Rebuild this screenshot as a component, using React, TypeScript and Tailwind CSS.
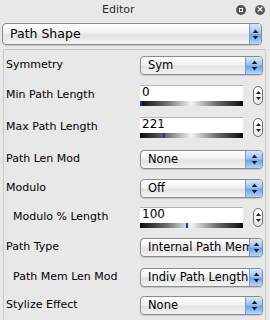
import type { ReactNode } from 'react'

const FONT = "font-['DejaVu_Sans',Verdana,sans-serif]"

function Arrows() {
  return (
    <svg viewBox="0 0 7 11" className="h-[11px] w-[7px]" aria-hidden>
      <path d="M3.5 0.5 L6.2 4 H0.8 Z" fill="#1b1b1b" />
      <path d="M3.5 10.5 L6.2 7 H0.8 Z" fill="#1b1b1b" />
    </svg>
  )
}

/** Aqua pop-up button. */
function Popup({ value, arrowW = 'w-[17px]', big = false }: { value: string; arrowW?: string; big?: boolean }) {
  return (
    <div
      className={`flex w-full min-w-0 overflow-hidden rounded-[4px] border border-[#8c8c8c] bg-[linear-gradient(#ffffff,#f1f1f1_45%,#e2e2e2_55%,#f4f4f4)] shadow-[0_1px_1px_rgba(0,0,0,0.15)] ${big ? 'h-[22px]' : 'h-[19px]'}`}
    >
      <span
        className={`min-w-0 flex-1 overflow-hidden whitespace-nowrap pl-[7px] text-black ${big ? 'text-[12.5px] leading-[20px]' : 'text-[11.5px] leading-[17px]'}`}
      >
        {value}
      </span>
      <span
        className={`grid shrink-0 place-items-center border-l border-[#7e9bc4] bg-[linear-gradient(#d7e8fb,#9cc3f2_45%,#6da4ea_55%,#b3d6fb)] ${arrowW}`}
      >
        <Arrows />
      </span>
    </div>
  )
}

function Stepper() {
  return (
    <div className="flex h-[19px] w-[10px] flex-col items-center justify-center gap-[3px] rounded-full border border-[#6f6f6f] bg-[linear-gradient(#ffffff,#e6e6e6)]">
      <svg viewBox="0 0 5 3" className="h-[3px] w-[5px]" aria-hidden>
        <path d="M2.5 0 L5 3 H0 Z" fill="#222" />
      </svg>
      <svg viewBox="0 0 5 3" className="h-[3px] w-[5px]" aria-hidden>
        <path d="M2.5 3 L5 0 H0 Z" fill="#222" />
      </svg>
    </div>
  )
}

/** Number field with its gradient slider strip underneath. */
function SliderField({ value, pos }: { value: string; pos: number }) {
  return (
    <div className="flex items-center gap-[10px]">
      <div className="flex h-[21px] w-[103px] flex-col justify-between border-t border-[#b5b5b5] bg-white">
        <span className="pl-[2px] text-[12px] leading-[13px] text-black">{value}</span>
        <div className="relative h-[5px] w-full bg-[linear-gradient(to_right,#0c0c0c,#6a6a6a_25%,#f4f4f4_50%,#6a6a6a_75%,#0c0c0c)]">
          <span className="absolute top-0 h-[5px] w-[2px] bg-[#1b2fd6]" style={{ left: `${pos}px` }} />
        </div>
      </div>
      <Stepper />
    </div>
  )
}

function Row({ label, indent = false, h, children }: { label: string; indent?: boolean; h: string; children: ReactNode }) {
  return (
    <div className={`flex items-center ${h}`}>
      <span className={`w-[135px] shrink-0 whitespace-nowrap text-[11px] text-black ${indent ? 'pl-[8px]' : 'pl-[1px]'}`}>
        {label}
      </span>
      <div className="min-w-0 flex-1">{children}</div>
    </div>
  )
}

export default function App() {
  return (
    <div className={`flex h-[320px] w-[270px] flex-col overflow-hidden bg-[#e8e8e8] ${FONT}`}>
      <div className="flex h-[19px] items-center">
        <span className="flex-1 pl-[102px] text-[11px] leading-none text-[#2a2a2a]">Editor</span>
        <div className="flex items-center gap-[9px] pr-[5px]">
          <span className="grid size-[10px] place-items-center rounded-full bg-[#555]">
            <span className="size-[4px] border border-white" />
          </span>
          <span className="grid size-[10px] place-items-center rounded-full bg-[#555] text-[9px] font-bold leading-none text-white">
            ×
          </span>
        </div>
      </div>

      <div className="mt-[4px] px-[2px] pr-[8px]">
        <Popup value="Path Shape" arrowW="w-[12px]" big />
      </div>

      <div className="ml-[3px] mr-[4px] mt-[4px] flex flex-1 flex-col border-l border-t border-r border-[#c9c9c9] pl-[1px] pr-[2px]">
        <Row label="Symmetry" h="h-[30px]">
          <Popup value="Sym" />
        </Row>
        <Row label="Min Path Length" h="h-[30px]">
          <SliderField value="0" pos={0} />
        </Row>
        <Row label="Max Path Length" h="h-[34px]">
          <SliderField value="221" pos={23} />
        </Row>
        <Row label="Path Len Mod" h="h-[30px]">
          <Popup value="None" />
        </Row>
        <Row label="Modulo" h="h-[28px]">
          <Popup value="Off" />
        </Row>
        <Row label="Modulo % Length" indent h="h-[30px]">
          <SliderField value="100" pos={46} />
        </Row>
        <Row label="Path Type" h="h-[31px]">
          <Popup value="Internal Path Mem" arrowW="w-[13px]" />
        </Row>
        <Row label="Path Mem Len Mod" indent h="h-[28px]">
          <Popup value="Indiv Path Length" arrowW="w-[13px]" />
        </Row>
        <Row label="Stylize Effect" h="h-[28px]">
          <Popup value="None" />
        </Row>
      </div>
    </div>
  )
}
